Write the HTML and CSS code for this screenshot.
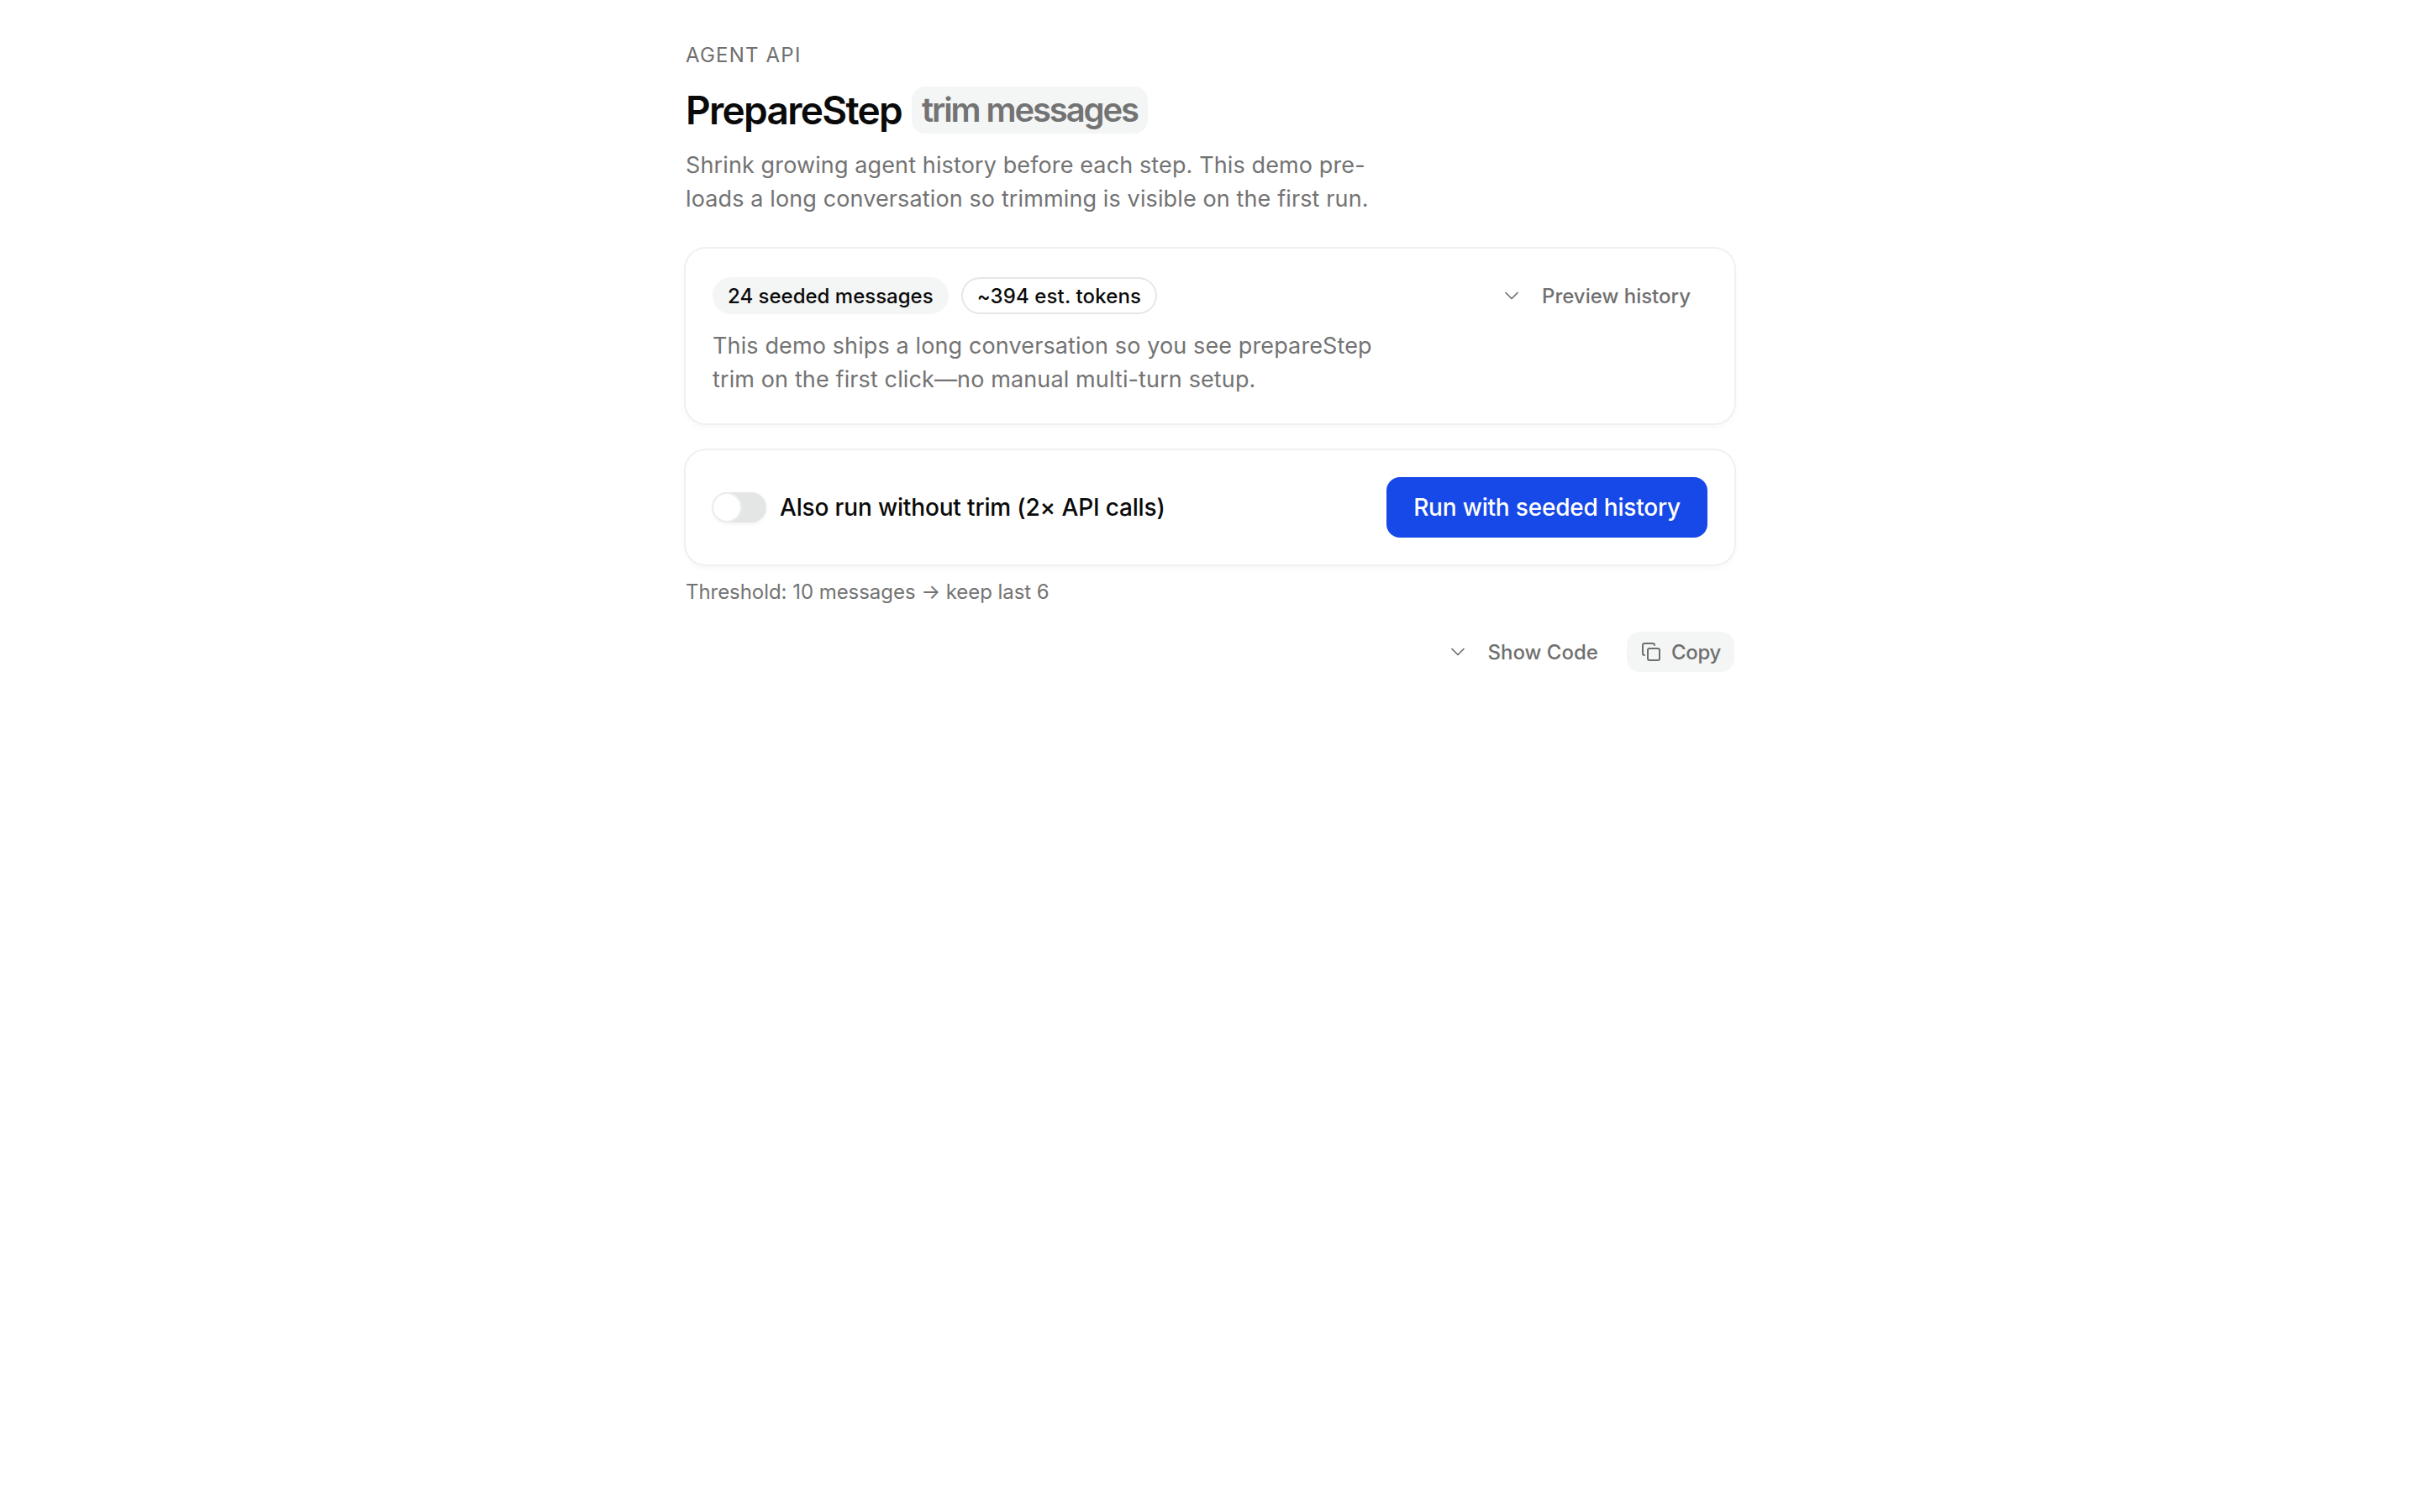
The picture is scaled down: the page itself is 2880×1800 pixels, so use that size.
FILE: index.html
```html
<!DOCTYPE html>
<html lang="en">
<head>
<meta charset="utf-8">
<title>PrepareStep</title>
<link rel="stylesheet" href="styles.css">
</head>
<body>
<main class="page">
  <header class="head">
    <p class="eyebrow">AGENT API</p>
    <h1 class="title"><span>PrepareStep</span><span class="title-tag">trim messages</span></h1>
    <p class="desc">Shrink growing agent history before each step. This demo pre-loads a long conversation so trimming is visible on the first run.</p>
  </header>
  <section class="card card-seed">
    <div class="seed-top">
      <div class="pills">
        <span class="pill pill-soft">24 seeded messages</span>
        <span class="pill pill-line">~394 est. tokens</span>
      </div>
      <button class="ghost" type="button">
        <svg class="chev" viewBox="0 0 24 24"><path d="m6 9 6 6 6-6"/></svg>
        <span>Preview history</span>
      </button>
    </div>
    <p class="desc">This demo ships a long conversation so you see prepareStep trim on the first click—no manual multi-turn setup.</p>
  </section>
  <section class="card card-run">
    <label class="toggle-row">
      <span class="toggle"><span class="thumb"></span></span>
      <span>Also run without trim (2× API calls)</span>
    </label>
    <button class="primary" type="button">Run with seeded history</button>
  </section>
  <p class="note">Threshold: 10 messages → keep last 6</p>
  <div class="actions">
    <button class="ghost" type="button">
      <svg class="chev" viewBox="0 0 24 24"><path d="m6 9 6 6 6-6"/></svg>
      <span>Show Code</span>
    </button>
    <button class="copy" type="button">
      <svg class="copy-icon" viewBox="0 0 24 24"><rect x="8" y="8" width="14" height="14" rx="2"/><path d="M4 16c-1.1 0-2-.9-2-2V4c0-1.1.9-2 2-2h10c1.1 0 2 .9 2 2"/></svg>
      <span>Copy</span>
    </button>
  </div>
</main>
</body>
</html>
```
FILE: styles.css
```css
* { box-sizing: border-box; }
html, body { margin: 0; background: #fff; }
body { font-family: Inter, "Liberation Sans", sans-serif; color: #0a0a0a; -webkit-font-smoothing: antialiased; }
button { font: inherit; border: 0; background: none; margin: 0; }
p, h1 { margin: 0; }

.page { width: 1248px; margin: 0 auto; padding-top: 50px; }
.eyebrow { font-size: 24px; line-height: 32px; letter-spacing: 1.2px; color: #6f6f6f; }
.title { display: flex; align-items: center; gap: 12px; margin-top: 21px; font-size: 46px; line-height: 56px; font-weight: 600; letter-spacing: -1.7px; color: #0a0a0a; }
.title-tag { padding: 0 12px; height: 56px; display: flex; align-items: center; background: #f4f5f5; border-radius: 16px; font-size: 40px; font-weight: 600; letter-spacing: -2.1px; color: #737373; }
.desc { max-width: 820px; font-size: 27px; line-height: 40px; letter-spacing: .12px; font-weight: 400; color: #737373; }
.head .desc { margin-top: 18px; }

.card { border-radius: 24px; background: #fff; box-shadow: 0 0 0 2px #f0f0f0, 0 4px 8px rgba(0,0,0,.04); padding: 32px; }
.card-seed { margin-top: 39px; }
.seed-top { display: flex; align-items: center; justify-content: space-between; height: 48px; margin-bottom: 16px; }
.pills { display: flex; gap: 15px; }
.pill { height: 44px; display: flex; align-items: center; padding: 0 18px; border-radius: 22px; font-size: 24px; font-weight: 450; color: #0a0a0a; }
.pill-soft { background: #f4f5f5; }
.pill-line { padding: 0 19px; letter-spacing: .12px; box-shadow: inset 0 0 0 2px #e6e6e6; }

.ghost { display: flex; align-items: center; gap: 22px; height: 48px; padding: 0 20px; font-size: 24px; font-weight: 450; color: #6f6f6f; }
.chev { width: 28px; height: 28px; fill: none; stroke: currentColor; stroke-width: 1.5; stroke-linecap: round; stroke-linejoin: round; }

.card-run { margin-top: 32px; display: flex; align-items: center; justify-content: space-between; }
.toggle-row { display: flex; align-items: center; gap: 16px; font-size: 28px; font-weight: 450; letter-spacing: -.16px; color: #0a0a0a; }
.toggle { width: 64px; height: 36px; border-radius: 18px; background: #e4e6e5; padding: 2px 0; display: block; box-shadow: 0 2px 4px rgba(0,0,0,.05); }
.thumb { display: block; width: 32px; height: 32px; margin-left: 1px; border-radius: 50%; background: #fff; box-shadow: 0 0 0 2px #ececec; }
.primary { height: 72px; padding: 0 32px; border-radius: 16px; background: #1748e8; color: #fff; font-size: 28px; font-weight: 450; letter-spacing: -.2px; }

.note { margin-top: 17px; margin-bottom: -1px; font-size: 24px; line-height: 32px; letter-spacing: -.05px; color: #737373; }
.actions { margin-top: 32px; display: flex; justify-content: flex-end; align-items: center; gap: 14px; }
.copy { display: flex; align-items: center; gap: 12px; height: 48px; padding: 0 16px 0 17px; border-radius: 16px; background: #f4f5f5; font-size: 24px; font-weight: 450; letter-spacing: -.3px; color: #6f6f6f; }
.copy-icon { width: 24px; height: 24px; fill: none; stroke: currentColor; stroke-width: 2; stroke-linecap: round; stroke-linejoin: round; }
```
